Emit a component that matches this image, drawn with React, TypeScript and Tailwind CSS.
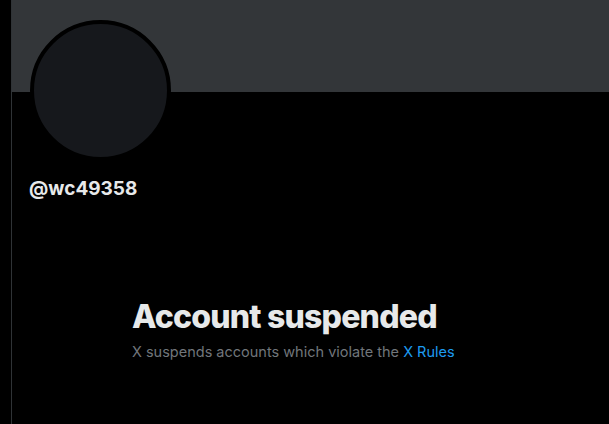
export default function App() {
  return (
    <div className="flex h-[424px] w-[609px] overflow-hidden bg-black font-['Inter',sans-serif]">
      <div className="w-3 shrink-0 border-r border-[#2f3336]" />
      <main className="flex-1">
        <div className="h-[92px] bg-[#333639]" />
        <div className="px-4">
          <div className="-mt-[72px] ml-0.5 h-[141px] w-[141px] rounded-full border-4 border-black bg-[#16181c]" />
          <h2 className="mt-4 pl-px text-[19px] leading-6 font-bold text-[#e7e9ea]">@wc49358</h2>
        </div>
        <section className="mt-[98px] pl-[120px]">
          <h1 className="text-[32px] leading-9 font-extrabold tracking-tight text-[#e7e9ea]">Account suspended</h1>
          <p className="mt-[7px] text-[14.5px] leading-5 text-[#71767b]">
            X suspends accounts which violate the <span className="text-[#1d9bf0]">X Rules</span>
          </p>
        </section>
      </main>
    </div>
  );
}
